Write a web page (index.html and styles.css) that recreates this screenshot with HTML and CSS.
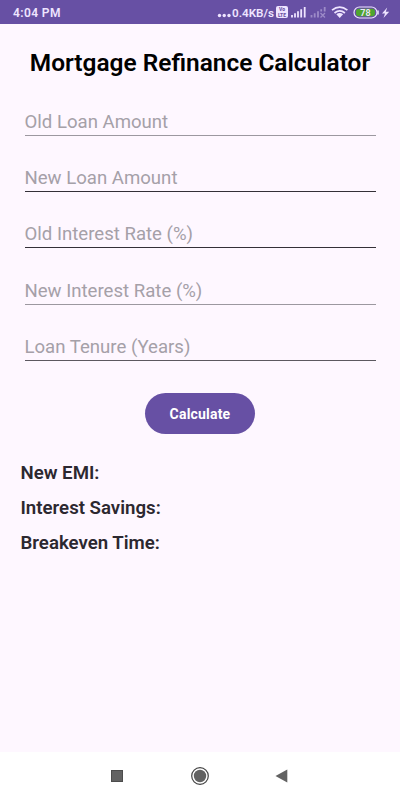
FILE: index.html
```html
<!DOCTYPE html>
<html lang="en">
<head>
<meta charset="utf-8">
<title>Mortgage Refinance Calculator</title>
<link rel="stylesheet" href="styles.css">
</head>
<body>
<header class="status">
  <span class="time">4:04 PM</span>
  <svg class="dots" width="15" height="24" viewBox="0 0 15 24" fill="currentColor"><circle cx="2.500" cy="15.500" r="1.700"/><circle cx="7.200" cy="15.500" r="1.700"/><circle cx="12" cy="15.500" r="1.700"/></svg>
  <span class="speed">0.4KB/s</span>
  <span class="volte"><span>Vo</span><span>LTE</span></span>
  <svg class="icons" width="112" height="24" viewBox="0 0 112 24" fill="none" stroke="currentColor">
    <path stroke-width="1.800" d="M4 17.500V15M7 17.500V13.300M10 17.500V11.300M13.200 17.500V9.200M16.700 17.500V7"/>
    <g opacity=".4"><path stroke-width="1.800" d="M23.500 17.500V15M26.700 17.500V13.300M30 17.500V11.300M33.200 11.500V9.200M36.700 11.500V7"/><path stroke-width="1.300" d="m32.500 13 4.500 4.500m0-4.500-4.500 4.500"/></g>
    <path stroke-width="1.700" d="M44 10.200Q51.700 4 59.400 10.200M46.500 13Q51.700 8.800 56.900 13"/><path fill="currentColor" stroke="none" d="M48.300 14.200Q51.700 11.900 55.100 14.200L51.700 18z"/>
    <rect x="66" y="7" width="23" height="11" rx="5.500" stroke-width="1.200"/><rect x="68" y="8.700" width="19" height="7.600" rx="3.300" fill="#4fa52f" stroke="none"/><path d="M90 10.500v4" stroke-width="1.500"/>
    <text x="77.500" y="15.700" text-anchor="middle" class="battery">78</text>
    <path fill="currentColor" stroke="none" d="m99.200 7.500-5.200 6h3l-1.500 4.500 5.700-6.200h-3.400z"/>
  </svg>
</header>
<main>
  <h1>Mortgage Refinance Calculator</h1>
  <section class="fields">
    <div class="field soft"><span>Old Loan Amount</span></div>
    <div class="field"><span>New Loan Amount</span></div>
    <div class="field"><span>Old Interest Rate (%)</span></div>
    <div class="field soft"><span>New Interest Rate (%)</span></div>
    <div class="field medium"><span>Loan Tenure (Years)</span></div>
  </section>
  <button type="button">Calculate</button>
  <section class="results">
    <p>New EMI:</p>
    <p>Interest Savings:</p>
    <p>Breakeven Time:</p>
  </section>
</main>
<nav>
  <svg width="200" height="48" viewBox="0 0 200 48" fill="#626262"><rect x="11.500" y="18.500" width="11" height="11" stroke="#4c4c4c"/><circle cx="100" cy="24" r="8.300" fill="none" stroke="#444" stroke-width="1.200"/><circle cx="100" cy="24" r="6.200"/><path d="M187.300 17.500v13L175.500 24z"/></svg>
</nav>
</body>
</html>
```

FILE: styles.css
```css
* { box-sizing: border-box; }
body { margin: 0; width: 400px; height: 800px; display: flex; flex-direction: column; overflow: hidden; background: #fef7ff; font-family: Roboto, sans-serif; }
.status { height: 24px; flex: none; display: flex; align-items: center; padding-left: 13px; background: #6750a4; color: #eee4ff; }
.time { width: 204px; font-size: 12px; font-weight: 600; letter-spacing: .4px; line-height: 24px; padding-top: 1px; }
.dots { flex: none; }
.speed { width: 43px; font-size: 11.700px; font-weight: 600; line-height: 24px; padding-top: 1px; white-space: nowrap; }
.volte { width: 12px; height: 12px; margin-left: 1px; border-radius: 2px; background: #eee4ff; color: #6750a4; display: flex; flex-direction: column; align-items: center; justify-content: center; font-size: 5px; line-height: 6px; font-weight: 800; }
.icons { flex: none; }
.battery { font-size: 9px; font-weight: 600; fill: #eee4ff; stroke: none; }
main { flex: 1; display: flex; flex-direction: column; padding: 22px 20px 0; }
h1 { margin: 0; height: 33.600px; line-height: 33.600px; text-align: center; font-size: 24.450px; font-weight: 600; color: #000; white-space: nowrap; }
.fields { display: flex; flex-direction: column; padding: 0 4.500px; }
.field { height: 56.250px; display: flex; align-items: flex-end; padding-bottom: 2px; border-bottom: 1px solid #343038; color: #a5a0a8; font-size: 18.600px; font-weight: 400; line-height: 22px; white-space: nowrap; }
.field.soft { border-color: #9c98a0; }
.field.medium { border-color: #5c5860; }
button { width: 110px; height: 41px; align-self: center; margin: 32.600px 0 0; padding: 1px 0 0; border: 0; border-radius: 20.500px; background: #6750a4; color: #fff; font: 700 14px/20px Roboto, sans-serif; letter-spacing: .2px; }
.results { margin-top: 20.500px; padding-left: .5px; }
.results p { margin: 0; height: 35px; line-height: 36px; font-size: 18.650px; font-weight: 600; color: #2c2830; }
nav { height: 48px; flex: none; background: #fff; display: flex; justify-content: center; }
```
